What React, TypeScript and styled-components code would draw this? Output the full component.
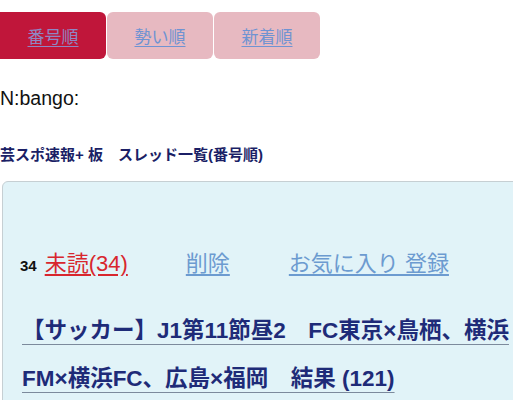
import React from 'react';
import styled, { createGlobalStyle } from 'styled-components';

const GlobalStyle = createGlobalStyle`
  html, body {
    margin: 0;
    padding: 0;
    background: #ffffff;
    overflow: hidden;
  }
  body {
    font-family: 'Liberation Sans', 'Noto Sans CJK JP', sans-serif;
    color: #111;
  }
`;

const Page = styled.div`
  width: 513px;
  height: 400px;
  overflow: hidden;
`;

const TabBar = styled.nav`
  display: flex;
  gap: 1px;
  margin-top: 12px;

  & > :first-child {
    border-top-left-radius: 0;
    border-bottom-left-radius: 0;
  }
`;

const Tab = styled.a<{ $active?: boolean }>`
  display: flex;
  align-items: center;
  justify-content: center;
  width: 106px;
  height: 47px;
  border-radius: 6px;
  background: ${({ $active }) => ($active ? '#c0163a' : '#e7b9c1')};
  color: ${({ $active }) => ($active ? '#8f86c4' : '#6f93d2')};
  font-family: 'Noto Sans CJK JP', sans-serif;
  font-size: 17px;
  text-decoration: underline;
  text-underline-offset: 3px;
  cursor: pointer;
`;

const NameLine = styled.div`
  margin-top: 28px;
  font-size: 19.5px;
  line-height: 22px;
  color: #111;
`;

const BoardTitle = styled.h1`
  margin: 36px 0 0 0;
  font-size: 15px;
  line-height: 20px;
  font-weight: bold;
  color: #1b1f66;
  white-space: nowrap;
`;

const ThreadBox = styled.section`
  margin: 16px 0 0 2px;
  width: 520px;
  min-height: 240px;
  box-sizing: border-box;
  padding: 67px 0 0 17px;
  background: #e1f3f8;
  border: 1px solid #c6cfd3;
  border-radius: 6px;
`;

const ActionRow = styled.div`
  display: flex;
  align-items: baseline;
  height: 30px;
  line-height: 30px;
`;

const Count = styled.span`
  font-size: 15px;
  font-weight: bold;
  color: #111;
  margin-right: 8px;
`;

const ActionLink = styled.a<{ $tone: 'unread' | 'plain'; $gap?: number }>`
  font-size: 22px;
  color: ${({ $tone }) => ($tone === 'unread' ? '#d8262e' : '#6c9bd0')};
  text-decoration: underline;
  text-underline-offset: 3px;
  margin-left: ${({ $gap }) => $gap ?? 0}px;
  cursor: pointer;
`;

const ThreadTitle = styled.div`
  margin-top: 28px;
  padding: 0 0 0 2px;
  width: 492px;
  font-size: 22.5px;
  line-height: 48px;
  font-weight: bold;
`;

const ThreadLink = styled.a`
  color: #1e2b78;
  text-decoration: underline;
  text-decoration-color: #7c8a9c;
  text-decoration-thickness: 1px;
  text-underline-offset: 6px;
  cursor: pointer;
`;

const App: React.FC = () => {
  return (
    <Page>
      <GlobalStyle />
      <TabBar>
        <Tab $active>番号順</Tab>
        <Tab>勢い順</Tab>
        <Tab>新着順</Tab>
      </TabBar>

      <NameLine>N:bango:</NameLine>

      <BoardTitle>芸スポ速報+ 板　スレッド一覧(番号順)</BoardTitle>

      <ThreadBox>
        <ActionRow>
          <Count>34</Count>
          <ActionLink $tone='unread'>未読(34)</ActionLink>
          <ActionLink $tone='plain' $gap={58}>
            削除
          </ActionLink>
          <ActionLink $tone='plain' $gap={59}>
            お気に入り 登録
          </ActionLink>
        </ActionRow>

        <ThreadTitle>
          <ThreadLink>【サッカー】J1第11節昼2　FC東京×鳥栖、横浜FM×横浜FC、広島×福岡　結果 (121)</ThreadLink>
        </ThreadTitle>
      </ThreadBox>
    </Page>
  );
};

export default App;
